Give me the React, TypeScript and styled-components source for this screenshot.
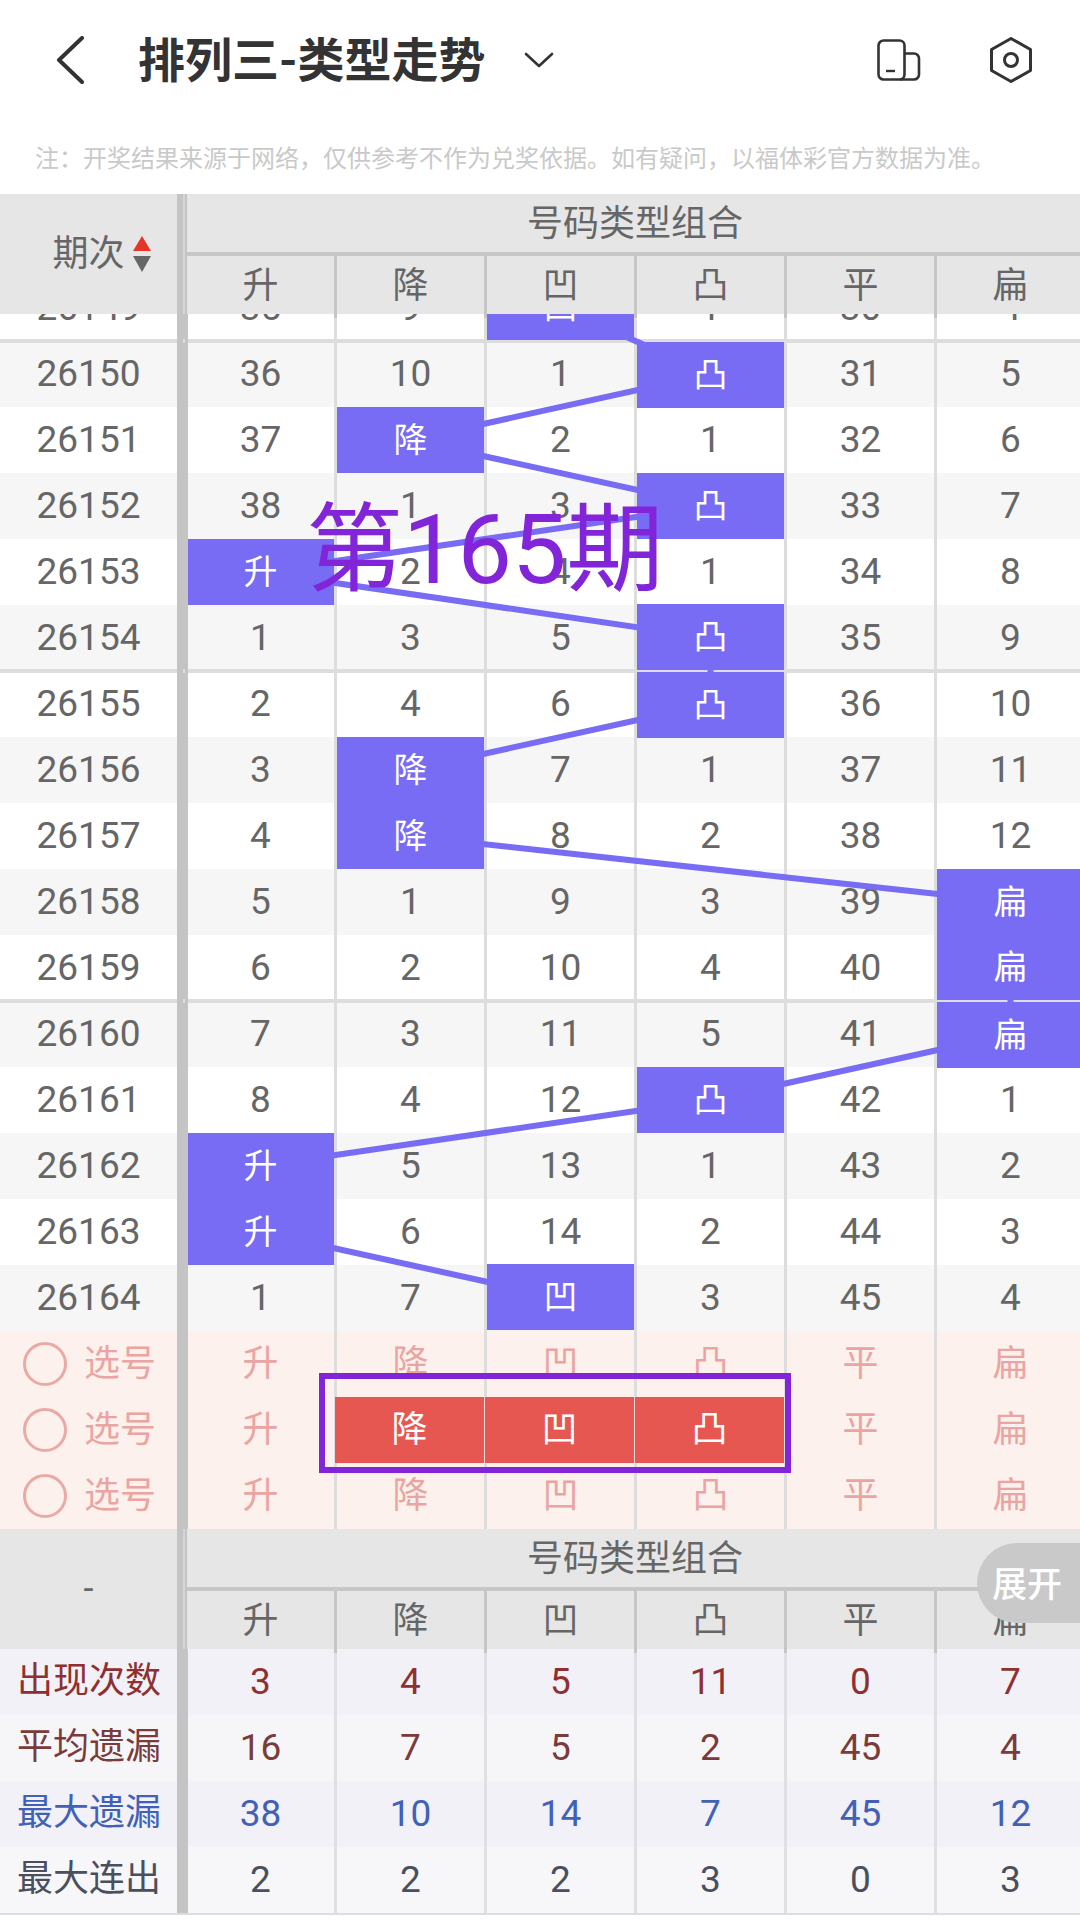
import styled, { createGlobalStyle } from "styled-components";

const ROW_HEIGHT = 66;
const LINE_COLOR = "#786bf4";
const MARK_COLOR = "#8224d8";
const TYPES = ["升", "降", "凹", "凸", "平", "扁"];

const ROWS: { issue: string; cells: string[] }[] = [
  { issue: "26149", cells: ["35", "9", "凹", "1", "30", "4"] },
  { issue: "26150", cells: ["36", "10", "1", "凸", "31", "5"] },
  { issue: "26151", cells: ["37", "降", "2", "1", "32", "6"] },
  { issue: "26152", cells: ["38", "1", "3", "凸", "33", "7"] },
  { issue: "26153", cells: ["升", "2", "4", "1", "34", "8"] },
  { issue: "26154", cells: ["1", "3", "5", "凸", "35", "9"] },
  { issue: "26155", cells: ["2", "4", "6", "凸", "36", "10"] },
  { issue: "26156", cells: ["3", "降", "7", "1", "37", "11"] },
  { issue: "26157", cells: ["4", "降", "8", "2", "38", "12"] },
  { issue: "26158", cells: ["5", "1", "9", "3", "39", "扁"] },
  { issue: "26159", cells: ["6", "2", "10", "4", "40", "扁"] },
  { issue: "26160", cells: ["7", "3", "11", "5", "41", "扁"] },
  { issue: "26161", cells: ["8", "4", "12", "凸", "42", "1"] },
  { issue: "26162", cells: ["升", "5", "13", "1", "43", "2"] },
  { issue: "26163", cells: ["升", "6", "14", "2", "44", "3"] },
  { issue: "26164", cells: ["1", "7", "凹", "3", "45", "4"] },
];

const STATS = [
  { label: "出现次数", tone: "#8f3030", bg: "#f1f1f7", values: ["3", "4", "5", "11", "0", "7"] },
  { label: "平均遗漏", tone: "#7a3b3b", bg: "#f6f6f8", values: ["16", "7", "5", "2", "45", "4"] },
  { label: "最大遗漏", tone: "#4160b8", bg: "#f1f1f7", values: ["38", "10", "14", "7", "45", "12"] },
  { label: "最大连出", tone: "#4a4f5e", bg: "#f7f7f9", values: ["2", "2", "2", "3", "0", "3"] },
];

const GlobalStyle = createGlobalStyle`
  html, body {
    margin: 0;
    padding: 0;
    background: #ffffff;
  }
  * {
    box-sizing: border-box;
  }
`;

const Page = styled.div`
  position: relative;
  width: 1080px;
  height: 1922px;
  overflow: hidden;
  background: #ffffff;
  color: #666666;
  font-family: Roboto, "Noto Sans CJK SC", sans-serif;
  font-size: 36px;
`;

const TopBar = styled.div`
  display: flex;
  align-items: center;
  height: 120px;
  padding: 0 47px 0 56px;
  color: #333333;
`;

const Title = styled.h1`
  margin: 0 0 0 52px;
  font-size: 47px;
  font-weight: 700;
  line-height: 1;
  color: #333333;
`;

const TitleCaret = styled.svg`
  margin-left: 38px;
`;

const TopActions = styled.div`
  display: flex;
  align-items: center;
  gap: 68px;
  margin-left: auto;
`;

const Note = styled.p`
  display: flex;
  align-items: center;
  height: 74px;
  margin: 0;
  padding: 0 0 2px 35px;
  font-size: 24px;
  white-space: nowrap;
  color: #c9c9c9;
`;

const HeadBlock = styled.div`
  position: relative;
  z-index: 5;
  display: flex;
  height: 120px;
  background: #e6e6e6;
`;

const HeadCorner = styled.div`
  display: flex;
  align-items: center;
  justify-content: center;
  gap: 8px;
  width: 177px;
  flex-shrink: 0;
  padding: 0 0 8px 26px;
`;

const SortMarks = styled.div`
  display: flex;
  flex-direction: column;
  gap: 5px;
  margin-top: 8px;
`;

const SortMark = styled.span<{ $up?: boolean }>`
  width: 0;
  height: 0;
  border-left: 9px solid transparent;
  border-right: 9px solid transparent;
  border-bottom: ${(props) => (props.$up ? "15px solid #e53527" : "0")};
  border-top: ${(props) => (props.$up ? "0" : "16px solid #666666")};
`;

const HeadDivider = styled.div`
  width: 10px;
  flex-shrink: 0;
  background: linear-gradient(
    to right,
    #c4c4c4 0 6px,
    #d6d6d6 6px 8px,
    #c4c4c4 8px
  );
`;

const HeadRight = styled.div`
  display: flex;
  flex-direction: column;
  flex-shrink: 0;
  width: 900px;
`;

const GroupTitle = styled.div`
  display: flex;
  align-items: center;
  justify-content: center;
  height: 62px;
  padding: 0 4px 6px 0;
  border-bottom: 4px solid #c6c6c6;
`;

const HeadCols = styled.div`
  display: flex;
  flex: 1;
`;

const HeadCol = styled.div`
  display: flex;
  align-items: center;
  justify-content: center;
  width: 150px;
  flex-shrink: 0;
  padding-bottom: 10px;
  border-right: 3px solid #c6c6c6;
`;

const Viewport = styled.div`
  height: 1017px;
  overflow: hidden;
`;

const ChartBody = styled.div`
  position: relative;
  margin-top: -39px;
`;

const TrendLines = styled.svg`
  position: absolute;
  top: 0;
  left: 0;
  z-index: 2;
  pointer-events: none;
`;

const Row = styled.div<{ $bg: string; $groupStart?: boolean }>`
  position: relative;
  display: flex;
  height: ${ROW_HEIGHT}px;
  background: ${(props) => props.$bg};

  ${(props) =>
    props.$groupStart &&
    `
    &::before {
      content: "";
      position: absolute;
      top: -2px;
      left: 0;
      right: 0;
      height: 4px;
      background: #dddddd;
      z-index: 1;
    }
  `}
`;

const IssueCell = styled.div`
  display: flex;
  align-items: center;
  justify-content: center;
  width: 177px;
  flex-shrink: 0;
  padding-bottom: 2px;
  font-size: 37px;
`;

const Divider = styled.div<{ $dot?: boolean }>`
  position: relative;
  z-index: 4;
  width: 11px;
  margin-right: -1px;
  flex-shrink: 0;
  background: #c4c4c4;

  ${(props) =>
    props.$dot &&
    `
    &::before {
      content: "";
      position: absolute;
      top: -2px;
      left: 6px;
      width: 2px;
      height: 4px;
      background: #dddddd;
    }
  `}
`;

const Cell = styled.div`
  display: flex;
  align-items: center;
  justify-content: center;
  width: 150px;
  flex-shrink: 0;
  padding-bottom: 2px;
  font-size: 37px;
  border-right: 3px solid #dddddd;
`;

const TypeCell = styled(Cell)`
  padding-bottom: 8px;
  font-size: 36px;
`;

const HitSlot = styled(Cell)`
  padding-bottom: 0;
`;

const HitFill = styled.div<{ $trimTop?: boolean; $trimBottom?: boolean }>`
  position: relative;
  z-index: 3;
  display: flex;
  align-items: center;
  justify-content: center;
  width: 100%;
  height: 100%;
  padding-bottom: 5px;
  margin-top: ${(props) => (props.$trimTop ? "2px" : "0")};
  margin-bottom: ${(props) => (props.$trimBottom ? "2px" : "0")};
  background: ${LINE_COLOR};
  color: #ffffff;
  font-size: 34px;
`;

const PickBlock = styled.div`
  position: relative;
`;

const PickRow = styled.div`
  display: flex;
  height: ${ROW_HEIGHT}px;
  background: #fcf1ec;
  color: #eaa5a3;
`;

const PickLabel = styled.label`
  display: flex;
  align-items: center;
  width: 177px;
  flex-shrink: 0;
  padding-left: 23px;
  gap: 17px;
  font-size: 36px;
`;

const PickCircle = styled.span`
  width: 44px;
  height: 44px;
  border: 3px solid #eba9a6;
  border-radius: 50%;
  flex-shrink: 0;
`;

const PickText = styled.span`
  margin-bottom: 8px;
  white-space: nowrap;
`;

const PickedCell = styled.div<{ $edge: "first" | "mid" | "last" }>`
  display: flex;
  align-items: center;
  justify-content: center;
  width: ${(props) => (props.$edge === "last" ? "152px" : "150px")};
  margin-left: ${(props) => (props.$edge === "first" ? "-2px" : "0")};
  padding-bottom: 8px;
  flex-shrink: 0;
  background: #e55750;
  background-clip: padding-box;
  color: #ffffff;
  border-right: ${(props) =>
    props.$edge === "last" ? "3px solid #dddddd" : "1px solid #f0d8d6"};
`;

const MarkBox = styled.div`
  position: absolute;
  top: 42px;
  left: 319px;
  width: 472px;
  height: 100px;
  border: 6px solid ${MARK_COLOR};
  z-index: 4;
`;

const MarkText = styled.div`
  position: absolute;
  top: 495px;
  left: 306px;
  z-index: 6;
  font-size: 97px;
  line-height: 110px;
  white-space: nowrap;
  color: ${MARK_COLOR};
`;

const ExpandPill = styled.div`
  position: absolute;
  top: 14px;
  right: 0;
  z-index: 6;
  display: flex;
  align-items: center;
  justify-content: flex-end;
  width: 103px;
  height: 80px;
  padding: 0 18px 4px 0;
  border-radius: 40px 0 0 40px;
  background: #c9c9c9;
  color: #ffffff;
  font-size: 35px;
  font-weight: 500;
`;

const StatLabel = styled.div`
  display: flex;
  align-items: center;
  justify-content: center;
  width: 177px;
  flex-shrink: 0;
  padding: 0 0 10px 1px;
`;

const StatRow = styled.div<{ $bg: string; $tone: string }>`
  display: flex;
  height: ${ROW_HEIGHT}px;
  background: ${(props) => props.$bg};
  color: ${(props) => props.$tone};
`;

const StatCell = styled.div`
  display: flex;
  align-items: center;
  justify-content: center;
  width: 150px;
  flex-shrink: 0;
  padding-bottom: 2px;
  font-size: 37px;
  border-right: 3px solid #e0e0e4;
`;

const BottomRule = styled.div`
  height: 2px;
  background: #dddddd;
`;

function BackIcon() {
  return (
    <svg width="30" height="48" viewBox="0 0 30 48" fill="none">
      <polyline
        points="26,2 3,24 26,46"
        stroke="#333333"
        strokeWidth="4"
        strokeLinecap="round"
        strokeLinejoin="round"
      />
    </svg>
  );
}

function CaretIcon() {
  return (
    <TitleCaret width="30" height="16" viewBox="0 0 30 16" fill="none">
      <polyline
        points="2,2 15,14 28,2"
        stroke="#333333"
        strokeWidth="2.6"
        strokeLinecap="round"
        strokeLinejoin="round"
      />
    </TitleCaret>
  );
}

function DevicesIcon() {
  return (
    <svg width="44" height="42" viewBox="0 0 44 42" fill="none">
      <rect
        x="1.5"
        y="1.5"
        width="26"
        height="39"
        rx="5"
        stroke="#333333"
        strokeWidth="2.6"
      />
      <path
        d="M27.5 14.5h9.5a5 5 0 0 1 5 5v16a5 5 0 0 1-5 5H23"
        stroke="#333333"
        strokeWidth="2.6"
      />
      <line
        x1="9"
        y1="32"
        x2="18"
        y2="32"
        stroke="#333333"
        strokeWidth="2.4"
      />
    </svg>
  );
}

function SettingsIcon() {
  return (
    <svg width="44" height="48" viewBox="0 0 44 48" fill="none">
      <path
        d="M22 2.5 41.5 13.5v21L22 45.5 2.5 34.5v-21z"
        stroke="#333333"
        strokeWidth="3"
        strokeLinejoin="round"
      />
      <circle cx="22" cy="24" r="6.5" stroke="#333333" strokeWidth="3" />
    </svg>
  );
}

function TableHead({ corner }: { corner: React.ReactNode }) {
  return (
    <>
      {corner}
      <HeadDivider />
      <HeadRight>
        <GroupTitle>号码类型组合</GroupTitle>
        <HeadCols>
          {TYPES.map((type) => (
            <HeadCol key={type}>{type}</HeadCol>
          ))}
        </HeadCols>
      </HeadRight>
    </>
  );
}

export default function App() {
  const points = ROWS.map((row, index) => {
    const col = row.cells.findIndex((cell) => TYPES.includes(cell));
    return `${187 + col * 150 + 73.5},${index * ROW_HEIGHT + ROW_HEIGHT / 2}`;
  }).join(" ");

  return (
    <Page>
      <GlobalStyle />
      <TopBar>
        <BackIcon />
        <Title>排列三-类型走势</Title>
        <CaretIcon />
        <TopActions>
          <DevicesIcon />
          <SettingsIcon />
        </TopActions>
      </TopBar>
      <Note>
        注：开奖结果来源于网络，仅供参考不作为兑奖依据。如有疑问，以福体彩官方数据为准。
      </Note>

      <HeadBlock>
        <TableHead
          corner={
            <HeadCorner>
              期次
              <SortMarks>
                <SortMark $up />
                <SortMark />
              </SortMarks>
            </HeadCorner>
          }
        />
      </HeadBlock>

      <Viewport>
        <ChartBody>
          <TrendLines width="1080" height={ROWS.length * ROW_HEIGHT}>
            <polyline
              points={points}
              fill="none"
              stroke={LINE_COLOR}
              strokeWidth="6"
            />
          </TrendLines>
          {ROWS.map((row, index) => {
            const groupStart = index % 5 === 1;
            const groupEnd = index % 5 === 0;
            return (
              <Row
                key={row.issue}
                $bg={index % 2 === 1 ? "#f6f6f6" : "#ffffff"}
                $groupStart={groupStart}
              >
                <IssueCell>{row.issue}</IssueCell>
                <Divider $dot={groupStart} />
                {row.cells.map((cell, col) =>
                  TYPES.includes(cell) ? (
                    <HitSlot key={col}>
                      <HitFill $trimTop={groupStart} $trimBottom={groupEnd}>
                        {cell}
                      </HitFill>
                    </HitSlot>
                  ) : (
                    <Cell key={col}>{cell}</Cell>
                  )
                )}
              </Row>
            );
          })}
        </ChartBody>
      </Viewport>

      <PickBlock>
        {[0, 1, 2].map((line) => (
          <PickRow key={line}>
            <PickLabel>
              <PickCircle />
              <PickText>选号</PickText>
            </PickLabel>
            <Divider />
            {TYPES.map((type, col) => {
              if (line === 1 && col >= 1 && col <= 3) {
                return (
                  <PickedCell
                    key={type}
                    $edge={col === 1 ? "first" : col === 3 ? "last" : "mid"}
                  >
                    {type}
                  </PickedCell>
                );
              }
              return <TypeCell key={type}>{type}</TypeCell>;
            })}
          </PickRow>
        ))}
        <MarkBox />
      </PickBlock>

      <HeadBlock>
        <TableHead corner={<HeadCorner style={{ padding: 0 }}>-</HeadCorner>} />
        <ExpandPill>展开</ExpandPill>
      </HeadBlock>

      {STATS.map((stat) => (
        <StatRow key={stat.label} $bg={stat.bg} $tone={stat.tone}>
          <StatLabel>{stat.label}</StatLabel>
          <Divider />
          {stat.values.map((value, col) => (
            <StatCell key={col}>{value}</StatCell>
          ))}
        </StatRow>
      ))}
      <BottomRule />

      <MarkText>第165期</MarkText>
    </Page>
  );
}
